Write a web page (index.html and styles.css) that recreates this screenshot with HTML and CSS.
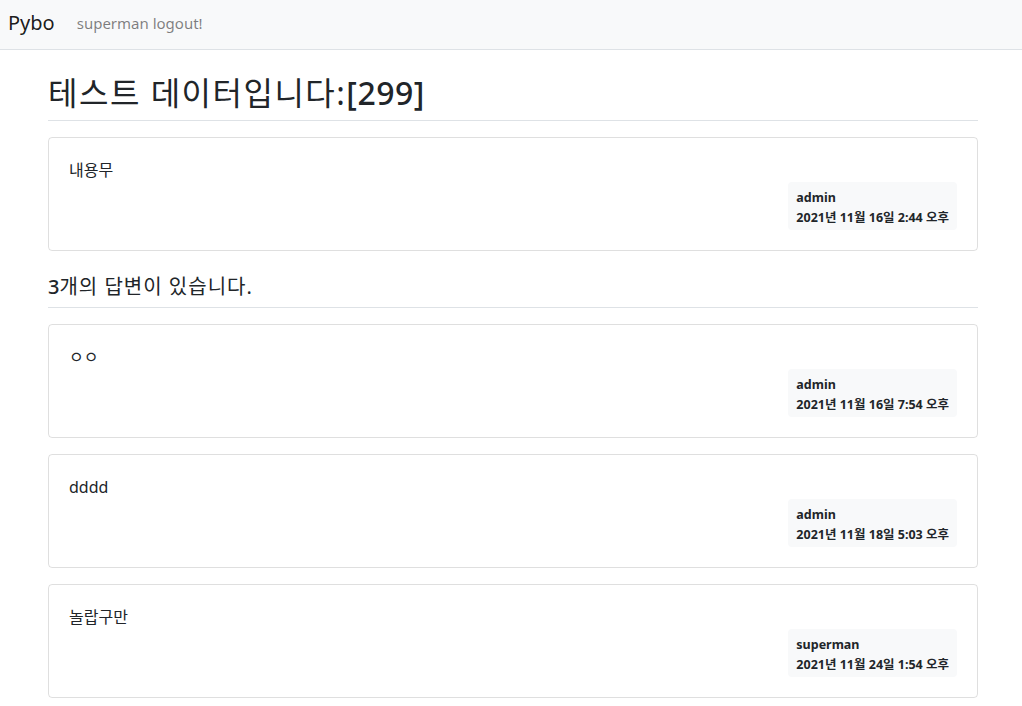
FILE: index.html
```
<!DOCTYPE html>
<html lang="ko">
<head>
<meta charset="utf-8">
<title>Pybo</title>
<link rel="stylesheet" href="styles.css">
</head>
<body>
<nav class="navbar">
  <a class="brand" href="#">Pybo</a>
  <a class="nav-link" href="#">superman logout!</a>
</nav>
<div class="container">
  <h2 class="title">테스트 데이터입니다:<span class="num">[299]</span></h2>
  <div class="card">
    <div class="card-body">
      <div class="card-text">내용무</div>
      <div class="meta-row">
        <div class="badge">
          <div class="author">admin</div>
          <div>2021년 11월 16일 2:44 오후</div>
        </div>
      </div>
    </div>
  </div>
  <h5 class="answer-count"><span class="num">3</span>개의 답변이 있습니다.</h5>
  <div class="card">
    <div class="card-body">
      <div class="card-text">ㅇㅇ</div>
      <div class="meta-row">
        <div class="badge">
          <div class="author">admin</div>
          <div>2021년 11월 16일 7:54 오후</div>
        </div>
      </div>
    </div>
  </div>
  <div class="card">
    <div class="card-body">
      <div class="card-text">dddd</div>
      <div class="meta-row">
        <div class="badge">
          <div class="author">admin</div>
          <div>2021년 11월 18일 5:03 오후</div>
        </div>
      </div>
    </div>
  </div>
  <div class="card">
    <div class="card-body">
      <div class="card-text">놀랍구만</div>
      <div class="meta-row">
        <div class="badge">
          <div class="author">superman</div>
          <div>2021년 11월 24일 1:54 오후</div>
        </div>
      </div>
    </div>
  </div>
</div>
</body>
</html>
```
FILE: styles.css
```
html { overflow: hidden; }
body {
  margin: 0;
  font-family: "Noto Sans", "Noto Sans CJK KR", sans-serif;
  font-size: 16px;
  line-height: 1.5;
  color: #212529;
  background: #fff;
}
a { text-decoration: none; }
.navbar {
  display: flex;
  align-items: center;
  height: 46px;
  padding: 0 8px 3px;
  background: #f8f9fa;
  border-bottom: 1px solid #dee2e6;
}
.brand {
  font-size: 20px;
  color: rgba(0,0,0,.9);
  margin-right: 14px;
  line-height: 30px;
}
.nav-link {
  color: rgba(0,0,0,.5);
  font-size: 15px;
  padding: 0 8px;
}
.container {
  width: 930px;
  margin: 16px 0 0 48px;
}
.title {
  margin: 0 0 16px;
  padding: 8px 0;
  font-size: 32px;
  font-weight: 400;
  letter-spacing: 1.5px;
  line-height: 1.2;
  border-bottom: 1px solid #dee2e6;
}
.title .num { font-weight: 500; letter-spacing: 0.5px; }
.answer-count {
  margin: 16px 0;
  padding: 8px 0;
  font-size: 20px;
  font-weight: 400;
  letter-spacing: 1px;
  line-height: 1.2;
  border-bottom: 1px solid #dee2e6;
}
.answer-count .num { font-weight: 500; letter-spacing: 0; }
.card {
  border: 1px solid rgba(0,0,0,.125);
  border-radius: 4px;
  margin: 16px 0;
}
.card-body { padding: 20px; }
.card-text { white-space: pre-line; }
.meta-row { display: flex; justify-content: flex-end; }
.badge {
  background: #f8f9fa;
  color: #212529;
  border-radius: 4px;
  padding: 10px 8px 6px;
  font-size: 12.5px;
  font-weight: 700;
  line-height: 12px;
  text-align: left;
}
.author { margin-bottom: 8px; }
```
